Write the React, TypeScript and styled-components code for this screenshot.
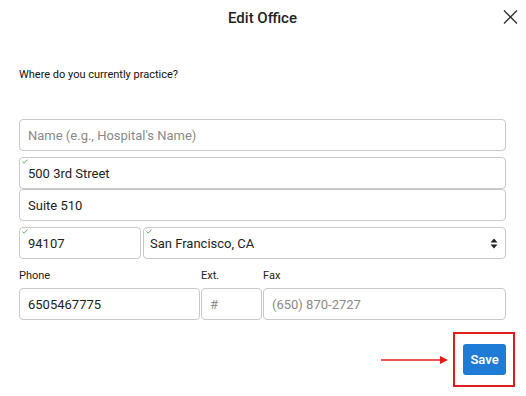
import styled, { createGlobalStyle } from "styled-components";

const GlobalStyle = createGlobalStyle`
    body {
        margin: 0;
        background: #ffffff;
        font-family: Roboto, "Liberation Sans", Arial, sans-serif;
        color: #222;
    }
`;

function Check() {
    return (
        <CheckMark width="6" height="5" viewBox="0 0 6 5">
            <path d="M0.5 2.6 L2.2 4.2 L5.5 0.6" fill="none" stroke="#5cb85c" strokeWidth="1" />
        </CheckMark>
    );
}

function App() {
    return (
        <>
            <GlobalStyle />
            <Modal>
                <Header>
                    <Title>Edit Office</Title>
                    <CloseButton aria-label="close">
                        <svg width="15" height="14" viewBox="0 0 15 14">
                            <path d="M1 0.5 L14 13.5 M14 0.5 L1 13.5" stroke="#333" strokeWidth="1.4" fill="none" />
                        </svg>
                    </CloseButton>
                </Header>

                <Question>Where do you currently practice?</Question>

                <Form>
                    <Field placeholder="Name (e.g., Hospital's Name)" />
                    <Stack $top={6}>
                        <FieldWrap>
                            <Check />
                            <Field defaultValue="500 3rd Street" />
                        </FieldWrap>
                        <Field defaultValue="Suite 510" />
                    </Stack>
                    <Row $top={6}>
                        <FieldWrap $width={122}>
                            <Check />
                            <Field defaultValue="94107" />
                        </FieldWrap>
                        <FieldWrap $grow>
                            <Check />
                            <SelectBox>
                                <span>San Francisco, CA</span>
                                <svg width="8" height="11" viewBox="0 0 8 11">
                                    <path d="M4 0.5 L7.5 4.5 L0.5 4.5 Z M4 10.5 L7.5 6.5 L0.5 6.5 Z" fill="#222" />
                                </svg>
                            </SelectBox>
                        </FieldWrap>
                    </Row>

                    <ContactGrid>
                        <Label>Phone</Label>
                        <Label>Ext.</Label>
                        <Label>Fax</Label>
                        <Field defaultValue="6505467775" />
                        <Field placeholder="#" />
                        <Field placeholder="(650) 870-2727" />
                    </ContactGrid>
                </Form>

                <Footer>
                    <svg width="68" height="10" viewBox="0 0 68 10">
                        <path d="M0 5 L60 5" stroke="#e31b1b" strokeWidth="1.5" />
                        <path d="M59 1 L67 5 L59 9 Z" fill="#e31b1b" />
                    </svg>
                    <Highlight>
                        <SaveButton>Save</SaveButton>
                    </Highlight>
                </Footer>
            </Modal>
        </>
    );
}

// Styling
const Modal = styled.div`
    width: 526px;
    height: 396px;
    box-sizing: border-box;
    padding: 0 20px 0 19px;
    display: flex;
    flex-direction: column;
`;

const Header = styled.div`
    height: 35px;
    display: flex;
    align-items: center;
    justify-content: center;
    position: relative;
`;

const Title = styled.h2`
    margin: 0;
    font-size: 15px;
    font-weight: 500;
    color: #222;
`;

const CloseButton = styled.button`
    position: absolute;
    right: -12px;
    top: 10px;
    padding: 0;
    border: none;
    background: none;
    display: flex;
    cursor: pointer;
`;

const Question = styled.p`
    margin: 33px 0 0;
    font-size: 11px;
    line-height: 14px;
    color: #111;
`;

const Form = styled.div`
    margin-top: 37px;
    display: flex;
    flex-direction: column;
`;

const Stack = styled.div<{ $top: number }>`
    margin-top: ${(p) => p.$top}px;
    display: flex;
    flex-direction: column;
`;

const Row = styled.div<{ $top: number }>`
    margin-top: ${(p) => p.$top}px;
    display: flex;
    gap: 2px;
`;

const FieldWrap = styled.div<{ $width?: number; $grow?: boolean }>`
    position: relative;
    display: flex;
    flex-direction: column;
    ${(p) => (p.$width ? `width: ${p.$width}px; flex: none;` : "")}
    ${(p) => (p.$grow ? "flex: 1;" : "")}
`;

const CheckMark = styled.svg`
    position: absolute;
    left: 3px;
    top: 2px;
`;

const Field = styled.input`
    box-sizing: border-box;
    width: 100%;
    height: 32px;
    padding: 0 8px;
    border: 1px solid #c8c8c8;
    border-radius: 4px;
    font-family: Roboto, "Liberation Sans", Arial, sans-serif;
    font-size: 13px;
    color: #222;
    background: #fff;
    outline: none;

    &::placeholder {
        color: #8a8a8a;
    }
`;

const SelectBox = styled.div`
    box-sizing: border-box;
    height: 32px;
    padding: 0 7px 0 6px;
    border: 1px solid #c8c8c8;
    border-radius: 4px;
    display: flex;
    align-items: center;
    justify-content: space-between;
    font-size: 13px;
    color: #222;
`;

const ContactGrid = styled.div`
    margin-top: 10px;
    display: grid;
    grid-template-columns: 181px 61px 1fr;
    column-gap: 1px;
    row-gap: 5px;
`;

const Label = styled.span`
    font-size: 11px;
    line-height: 14px;
    color: #222;
`;

const Footer = styled.div`
    margin-top: 12px;
    margin-right: -9px;
    display: flex;
    justify-content: flex-end;
    align-items: center;
    gap: 4px;
`;

const Highlight = styled.div`
    border: 2px solid #e31b1b;
    padding: 10px 7px 10px 8px;
    display: flex;
`;

const SaveButton = styled.button`
    height: 31px;
    width: 43px;
    border: none;
    border-radius: 3px;
    background: #1e7bd6;
    color: #fff;
    font-family: Roboto, "Liberation Sans", Arial, sans-serif;
    font-size: 13px;
    font-weight: 600;
    padding: 0;
    cursor: pointer;
`;

export default App;
